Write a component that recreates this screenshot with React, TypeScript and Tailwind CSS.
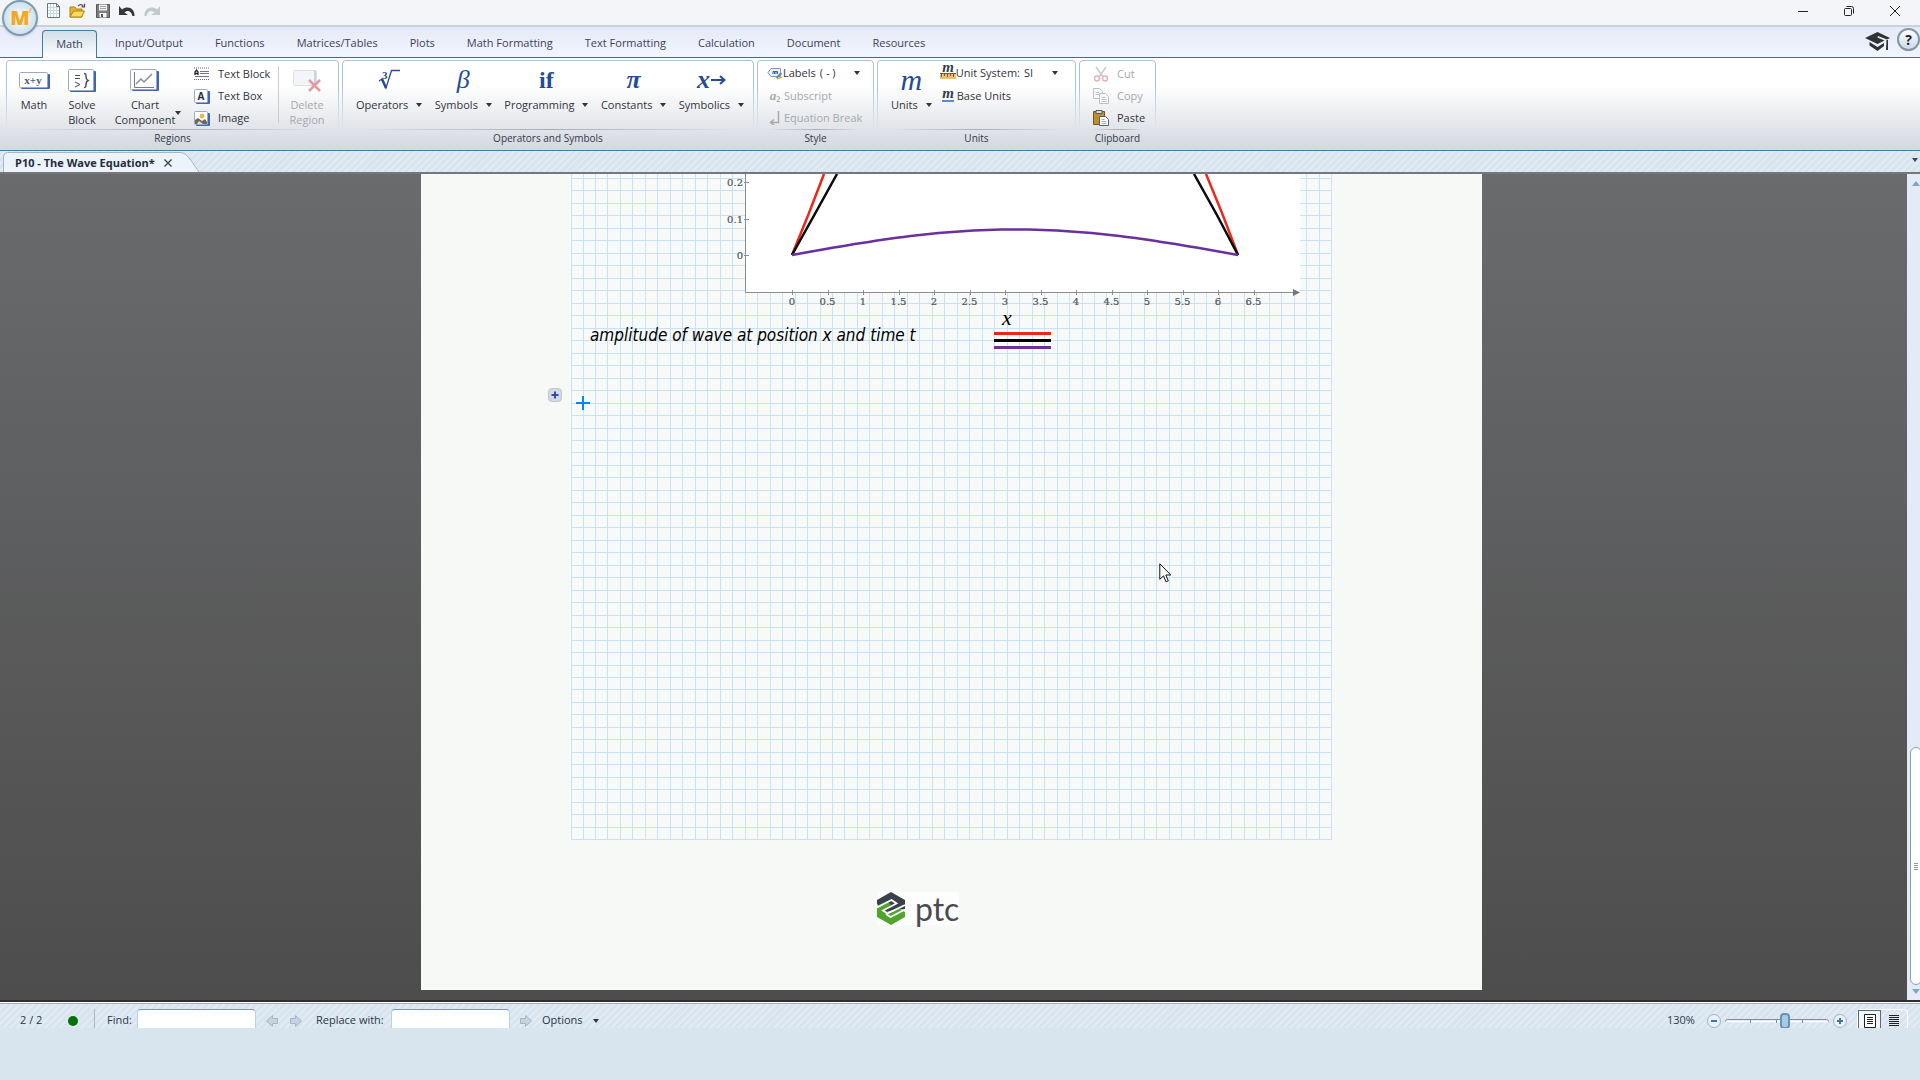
import * as React from "react";
import clsx from "clsx";

const tabs = [
  "Input/Output",
  "Functions",
  "Matrices/Tables",
  "Plots",
  "Math Formatting",
  "Text Formatting",
  "Calculation",
  "Document",
  "Resources",
];

const stripes =
  "bg-[#d8e4ee] bg-[repeating-linear-gradient(135deg,transparent_0px,transparent_3px,#e2ebf3_3px,#e2ebf3_5px)]";

function Caret({ className }: { className?: string }) {
  return (
    <svg viewBox="0 0 6 4" className={clsx("h-1 w-1.5 shrink-0", className)} fill="currentColor" aria-hidden="true">
      <path d="M0 0h6L3 4z" />
    </svg>
  );
}

/** Blue-edged tile shared by the region icons. */
function Tile({ w, h, children }: { w: number; h: number; children?: React.ReactNode }) {
  return (
    <svg width={w} height={h} viewBox={`0 0 ${w} ${h}`} aria-hidden="true">
      <rect x="2" y="2" width={w - 2} height={h - 2} rx="1" fill="#3f66b5" />
      <rect x="0.5" y="0.5" width={w - 3} height={h - 2} rx="1" fill="#fdfdfe" stroke="#9aa9c6" />
      {children}
    </svg>
  );
}

/* ---------- title bar ---------- */

function TitleBar() {
  return (
    <header className="flex h-[27px] items-start justify-between border-b-2 border-[#cbd0dc] bg-[#f3f5f8]">
      <div className="flex gap-[7px] pl-[45px] pt-[3px]">
        <button type="button" aria-label="New" className="h-4 w-4">
          <svg viewBox="0 0 16 16">
            <path d="M2.500.5h9l3 3v11h-12z" fill="#f8fbfb" stroke="#6c7478" />
            <path d="M11.500.5v3h3" fill="none" stroke="#6c7478" />
            <path d="M5.500 1v13M8.500 1v13M11.500 4v10M3 4.500h11M3 7.500h11M3 10.500h11" stroke="#c3dce2" />
          </svg>
        </button>
        <button type="button" aria-label="Open" className="h-4 w-[18px]">
          <svg viewBox="0 0 18 16">
            <path d="M2 14V4h5l1 2h6v8z" fill="#e9b52c" stroke="#a9801f" />
            <path d="M2 14l3.500-6h11l-3 6z" fill="#ffdc55" stroke="#a9801f" />
            <path d="M10 3c2-2 4-1.500 5 0M16.500.8v3h-3" fill="none" stroke="#4b5055" strokeWidth="1.300" />
          </svg>
        </button>
        <button type="button" aria-label="Save" className="ml-0.5 h-4 w-4">
          <svg viewBox="0 0 16 16">
            <path d="M1.500 1.500h13v13h-13z" fill="#7d7d7f" stroke="#58585b" />
            <path d="M4 1.500h8v6H4z" fill="#eef0f1" />
            <path d="M5 3.500h6M5 5.500h6" stroke="#a2a5a8" />
            <path d="M4.500 10h7v4.500h-7z" fill="#f4f5f6" />
            <path d="M6 11h2v3H6z" fill="#58585b" />
          </svg>
        </button>
        <button type="button" aria-label="Undo" className="h-4 w-[18px]">
          <svg viewBox="0 0 18 16">
            <path d="M1 3v9h9L6.500 9.500c3-2.500 6.500-2 8 3.500h2C17 6 10 2 4 6.500z" fill="#33373c" />
          </svg>
        </button>
        <button type="button" aria-label="Redo" disabled className="h-4 w-[18px]">
          <svg viewBox="0 0 18 16">
            <path d="M17 3v9H8l3.500-2.500c-3-2.500-6.500-2-8 3.500h-2C1 6 8 2 14 6.500z" fill="#c4c9cc" />
          </svg>
        </button>
      </div>
      <div className="flex gap-9 pr-5 pt-[5px] text-[#222]">
        <button type="button" aria-label="Minimize" className="h-3 w-2.5">
          <svg viewBox="0 0 10 12" fill="none" stroke="currentColor">
            <path d="M0 6.500h10" />
          </svg>
        </button>
        <button type="button" aria-label="Restore" className="h-3 w-2.5">
          <svg viewBox="0 0 10 12" fill="none" stroke="currentColor">
            <rect x="0.5" y="3.500" width="7" height="7" rx="1" />
            <path d="M2.500 1.500h5a2 2 0 0 1 2 2v5" />
          </svg>
        </button>
        <button type="button" aria-label="Close" className="h-3 w-2.5">
          <svg viewBox="0 0 10 12" fill="none" stroke="currentColor">
            <path d="M0 1l10 10M10 1L0 11" />
          </svg>
        </button>
      </div>
    </header>
  );
}

function AppButton() {
  return (
    <button
      type="button"
      aria-label="Application menu"
      className="absolute left-[2px] top-0 flex h-9 w-9 items-center justify-center rounded-full border-2 border-[#7d9bb4] bg-radial from-white to-[#bcd5e6] text-[20px] leading-none font-extrabold text-[#f5a623] shadow-sm"
    >
      M
      <svg className="absolute right-1 top-1.5 h-1.5 w-1" viewBox="0 0 4 6" fill="#f7c46a" aria-hidden="true">
        <path d="M2 0h2L2 5H0z" />
      </svg>
    </button>
  );
}

function TabStrip() {
  return (
    <nav className="flex h-[31px] items-end justify-between border-b border-[#2f7a80] bg-linear-to-b from-[#e6eaf6] to-[#f0f5ff]">
      <div className="flex items-end pl-[42px] text-[#3c4257]">
        <button
          type="button"
          className="-mb-px mr-0.5 h-[28px] w-[55px] rounded-t border border-b-0 border-[#3f7d99] bg-linear-to-b from-[#cfdfea] to-white"
        >
          Math
        </button>
        {tabs.map((t) => (
          <button key={t} type="button" className="h-[27px] px-4">
            {t}
          </button>
        ))}
      </div>
      <div className="flex items-center gap-[7px] self-start">
        <button type="button" aria-label="Learning" className="mt-1 h-[19px] w-[25px]">
          <svg viewBox="0 0 25 19" fill="#303236">
            <path d="M12.500 0L25 6l-3 1.500-9-3.500-.5 1.500 7 3-7 3.500L0 6z" />
            <path d="M4.500 10v3.500l8 5.500 6.500-5v-3l-6.500 4z" />
            <path d="M21.500 8h1.500v10h-2z" />
          </svg>
        </button>
        <button
          type="button"
          aria-label="Help"
          className="mt-px h-[23px] w-[23px] rounded-full border-2 border-[#8396a8] bg-linear-to-b from-white to-[#cddae6] text-[14px] leading-none font-bold text-[#1d2230]"
        >
          ?
        </button>
      </div>
    </nav>
  );
}

/* ---------- ribbon ---------- */

interface GroupProps {
  label: string;
  className?: string;
  children: React.ReactNode;
}

function Group({ label, className, children }: GroupProps) {
  return (
    <section aria-label={label} className={clsx("flex h-[86px] flex-col", className)}>
      <div className="relative flex flex-1 rounded-t">
        <div className="pointer-events-none absolute inset-0 rounded-t border border-b-0 border-[#a9c1da] mask-b-from-40%" />
        {children}
      </div>
      <div className="mx-3 h-px bg-linear-to-r from-transparent via-[#a9aeb6] to-transparent" />
      <div className="h-4 text-center text-[10px] leading-4 text-[#32384a]">{label}</div>
    </section>
  );
}

interface BigButtonProps {
  icon: React.ReactNode;
  label: React.ReactNode;
  disabled?: boolean;
  className?: string;
}

function BigButton({ icon, label, disabled, className }: BigButtonProps) {
  return (
    <button
      type="button"
      disabled={disabled}
      className={clsx("flex flex-col items-center pt-2", disabled && "text-[#a6a9ad]", className)}
    >
      <span className="flex h-6 items-center justify-center">{icon}</span>
      <span className="mt-[5px] leading-[15px]">{label}</span>
    </button>
  );
}

function OperatorButton({ glyph, label }: { glyph: React.ReactNode; label: string }) {
  return (
    <button type="button" className="flex flex-col items-center pt-1.5">
      <span className="flex h-7 items-center justify-center font-['Liberation_Serif',serif] text-[24px] leading-7 font-bold text-[#264a94]">
        {glyph}
      </span>
      <span className="mt-[3px] flex items-center gap-2 leading-[15px]">
        {label}
        <Caret />
      </span>
    </button>
  );
}

interface SmallButtonProps {
  icon: React.ReactNode;
  label: string;
  disabled?: boolean;
  gap?: string;
}

function SmallButton({ icon, label, disabled, gap = "gap-2" }: SmallButtonProps) {
  return (
    <button
      type="button"
      disabled={disabled}
      className={clsx("flex h-[22px] items-center whitespace-nowrap", gap, disabled && "text-[#a6a9ad]")}
    >
      <span className="flex w-4 shrink-0 justify-center">{icon}</span>
      {label}
    </button>
  );
}

function RegionsGroup() {
  return (
    <Group label="Regions" className="w-[333px]">
      <div className="flex flex-1 pl-1">
        <BigButton
          className="w-12"
          label="Math"
          icon={
            <Tile w={31} h={17}>
              <text x="14" y="12" textAnchor="middle" fontSize="11" fontWeight="bold" fontFamily="Liberation Serif, serif" fill="#505b70">
                x+y
              </text>
            </Tile>
          }
        />
        <BigButton
          className="w-12"
          label={<>Solve<br />Block</>}
          icon={
            <Tile w={28} h={23}>
              <path d="M7 6.500h5M7 9.500h5M7 13l5 2.500-5 2.500" fill="none" stroke="#4c4f55" />
              <path d="M16 4.500c2 0 2 1 2 3s0 3 2 4c-2 1-2 2-2 4s0 3-2 3" fill="none" stroke="#4c4f55" strokeWidth="1.500" />
            </Tile>
          }
        />
        <div className="flex w-[84px] items-end justify-center">
          <BigButton
            className="h-full"
            label={<>Chart<br />Component</>}
            icon={
              <Tile w={29} h={22}>
                <path d="M4.500 3v15.500H24" fill="none" stroke="#777b82" />
                <path d="M6 15l5-5 3 3 8-8" fill="none" stroke="#8a8e95" strokeWidth="1.500" />
              </Tile>
            }
          />
          <Caret className="mb-3.5" />
        </div>
        <div className="flex w-[88px] flex-col pl-1 pt-[3px]">
          <SmallButton
            label="Text Block"
            icon={
              <svg width="16" height="14" viewBox="0 0 16 14" aria-hidden="true">
                <path d="M0 1h16M0 12.500h16" stroke="#4d6cb3" strokeDasharray="1 1" />
                <path d="M6 4.500h9M6 6.500h9M1 9.500h14" stroke="#777" />
                <path d="M1 8V5l1.500-2L4 5v3M1 6.500h3" fill="none" stroke="#222" strokeWidth="1.300" />
              </svg>
            }
          />
          <SmallButton
            label="Text Box"
            icon={
              <Tile w={16} h={15}>
                <text x="7" y="11" textAnchor="middle" fontSize="10" fontWeight="bold" fill="#2c2f36">
                  A
                </text>
              </Tile>
            }
          />
          <SmallButton
            label="Image"
            icon={
              <Tile w={16} h={15}>
                <circle cx="8" cy="5" r="2" fill="#f3c233" stroke="#c28e12" strokeWidth="0.5" />
                <path d="M1 13V9l3-2 4 3 3-2 2 3v2z" fill="#6f6658" />
                <path d="M3 13l2-3 4 3z" fill="#e8e2d2" />
              </Tile>
            }
          />
        </div>
        <div className="my-1.5 w-px bg-[#c9ccd2]" />
        <BigButton
          className="w-14"
          disabled
          label={<>Delete<br />Region</>}
          icon={
            <svg width="29" height="24" viewBox="0 0 29 24" aria-hidden="true">
              <rect x="0.5" y="2.500" width="23" height="15" rx="1" fill="#f4f5f9" stroke="#dcdfe8" />
              <path d="M22 3v14" stroke="#c9d3ea" strokeWidth="2" />
              <path d="M16 12l11 11M27 12L16 23" stroke="#e79a9d" strokeWidth="2.500" />
            </svg>
          }
        />
      </div>
    </Group>
  );
}

function OperatorsGroup() {
  return (
    <Group label="Operators and Symbols" className="w-[412px]">
      <div className="flex flex-1 items-start justify-between pl-3.5 pr-2.5">
        <OperatorButton
          label="Operators"
          glyph={
            <svg width="24" height="24" viewBox="0 0 24 24" aria-hidden="true">
              <path d="M2 13l3-2 4 9L14.500 2.500H23" fill="none" stroke="#264a94" strokeWidth="1.300" />
              <path d="M5 11l4 9" stroke="#264a94" strokeWidth="2.500" />
              <text x="5" y="11" fontSize="11" fontFamily="Liberation Serif, serif" fill="#264a94">
                3
              </text>
            </svg>
          }
        />
        <OperatorButton label="Symbols" glyph={<i className="text-[26px] font-normal">β</i>} />
        <OperatorButton label="Programming" glyph="if" />
        <OperatorButton label="Constants" glyph={<i className="text-[26px]">π</i>} />
        <OperatorButton
          label="Symbolics"
          glyph={
            <>
              <i className="text-[26px]">x</i>
              <svg width="16" height="12" viewBox="0 0 16 12" fill="none" stroke="currentColor" strokeWidth="2" aria-hidden="true">
                <path d="M1 6h13M10 2l4.500 4-4.500 4" />
              </svg>
            </>
          }
        />
      </div>
    </Group>
  );
}

function StyleGroup() {
  return (
    <Group label="Style" className="w-[117px]">
      <div className="flex flex-1 flex-col pl-2.5 pr-1.5 pt-[3px]">
        <div className="flex h-5 items-center">
          <svg width="16" height="14" viewBox="0 0 16 14" className="shrink-0" aria-hidden="true">
            <path d="M1 6.500l3-4h9.500v8H4z" fill="#eaf1fb" stroke="#7b97c6" />
            <path d="M6 8V5.500h1.500V8M7.500 5.500H9V8M9 5.500h1.500V8" fill="none" stroke="#3a5fa8" />
            <path d="M14.500 7l-5 5" stroke="#5d86d0" strokeWidth="2" />
            <path d="M10 13l5-2" stroke="#e4b13c" strokeWidth="1.500" />
          </svg>
          <label htmlFor="labels">Labels</label>
          <select id="labels" className="ml-1 flex-1 appearance-none bg-transparent">
            <option>( - )</option>
          </select>
          <Caret className="mr-2" />
        </div>
        <div className="flex flex-col items-start pt-0.5">
          <SmallButton
            disabled
            gap="gap-px"
            label="Subscript"
            icon={
              <span className="font-['Liberation_Serif',serif] text-[13px] font-bold italic">
                a<sub className="text-[8px] not-italic">2</sub>
              </span>
            }
          />
          <SmallButton
            disabled
            gap="gap-px"
            label="Equation Break"
            icon={
              <svg width="12" height="14" viewBox="0 0 12 14" fill="none" stroke="currentColor" strokeWidth="1.500" aria-hidden="true">
                <path d="M9.500 0v11.500H2M5 8.500l-3.500 3 3.500 2.500" />
              </svg>
            }
          />
        </div>
      </div>
    </Group>
  );
}

function UnitsGroup() {
  return (
    <Group label="Units" className="w-[199px]">
      <div className="flex flex-1 items-start pl-3.5 pr-[18px]">
        <OperatorButton label="Units" glyph={<i className="text-[30px] font-normal">m</i>} />
        <div className="flex flex-1 flex-col pl-2 pt-[3px]">
          <div className="flex h-5 items-center">
            <svg width="16" height="16" viewBox="0 0 16 16" className="shrink-0 overflow-visible" aria-hidden="true">
              <text x="8" y="7" textAnchor="middle" fontSize="15" fontWeight="bold" fontStyle="italic" fontFamily="Liberation Serif, serif" fill="#333a48">
                m
              </text>
              <rect x="0" y="8" width="16" height="6" fill="#f0c070" />
              <path d="M0 8.500h16M1.500 8v4M4.500 8v3M7.500 8v4M10.500 8v3M13.500 8v4" stroke="#6d5a3a" />
            </svg>
            <label htmlFor="unit-system" className="whitespace-nowrap">Unit System:</label>
            <select id="unit-system" className="ml-1 w-6 flex-1 appearance-none bg-transparent">
              <option>SI</option>
            </select>
            <Caret />
          </div>
          <div className="flex flex-col items-start pt-0.5">
            <SmallButton
              gap="gap-px"
              label="Base Units"
              icon={
                <svg width="12" height="12" viewBox="0 0 12 12" className="overflow-visible" aria-hidden="true">
                  <text x="6" y="8" textAnchor="middle" fontSize="15" fontWeight="bold" fontStyle="italic" fontFamily="Liberation Serif, serif" fill="#333a48">
                    m
                  </text>
                  <path d="M0 11h12" stroke="#2f62c4" strokeWidth="1.500" />
                </svg>
              }
            />
          </div>
        </div>
      </div>
    </Group>
  );
}

function ClipboardGroup() {
  return (
    <Group label="Clipboard" className="w-[77px]">
      <div className="flex flex-1 flex-col pl-3.5 pt-[3px]">
        <SmallButton
          disabled
          label="Cut"
          icon={
            <svg width="16" height="16" viewBox="0 0 16 16" fill="none" aria-hidden="true">
              <path d="M3 1l7 10M13 1L6 11" stroke="#c7c9cd" strokeWidth="1.500" />
              <circle cx="4" cy="12.500" r="2.500" stroke="#e6b5b8" strokeWidth="1.500" />
              <circle cx="12" cy="12.500" r="2.500" stroke="#e6b5b8" strokeWidth="1.500" />
            </svg>
          }
        />
        <SmallButton
          disabled
          label="Copy"
          icon={
            <svg width="16" height="16" viewBox="0 0 16 16" fill="#f7f8f9" stroke="#bcbfc4" aria-hidden="true">
              <path d="M.5.5h6l3 3v7h-9z" />
              <path d="M2.500 4.500h4M2.500 6.500h4" />
              <path d="M6.500 5.500h6l3 3v7h-9z" />
              <path d="M8.500 9.500h4M8.500 11.500h5M8.500 13.500h5" />
            </svg>
          }
        />
        <SmallButton
          label="Paste"
          icon={
            <svg width="16" height="16" viewBox="0 0 16 16" aria-hidden="true">
              <path d="M.5 1.500h11v13H.5z" fill="#c18d2c" stroke="#73541c" />
              <path d="M3 .5h6v3H3z" fill="#d9dcdf" stroke="#55585c" />
              <path d="M6.500 6.500h6l3 3v6h-9z" fill="#fff" stroke="#55606e" />
              <path d="M8.500 9.500h3M8.500 11.500h5M8.500 13.500h5" stroke="#a3a9b2" />
            </svg>
          }
        />
      </div>
    </Group>
  );
}

function Ribbon() {
  return (
    <div className="flex h-[93px] items-start gap-[3px] border-b border-[#4480a8] bg-linear-to-b from-white from-30% to-[#d3d7df] pl-1.5 pt-0.5 text-[#32353b]">
      <RegionsGroup />
      <OperatorsGroup />
      <StyleGroup />
      <UnitsGroup />
      <ClipboardGroup />
    </div>
  );
}

function DocumentTabs() {
  return (
    <div className={clsx("flex h-[23px] items-end justify-between border-b-2 border-[#75777c]", stripes)}>
      <div className="relative flex h-5 items-center gap-2 pl-[15px] pt-0.5">
        <svg className="absolute bottom-0 left-0 h-5 w-[202px]" viewBox="0 0 202 20" aria-hidden="true">
          <path d="M3.500 20V4.500q0-4 4-4H180q6 0 11 8l8 11.500" fill="#edf3fa" stroke="#a7b4c4" />
        </svg>
        <span className="relative font-bold text-[#252c3b]">P10 - The Wave Equation*</span>
        <button type="button" aria-label="Close document" className="relative h-2.5 w-2.5 text-[#3c4250]">
          <svg viewBox="0 0 10 10" fill="none" stroke="currentColor" strokeWidth="1.300">
            <path d="M1.500 1.500l7 7M8.500 1.500l-7 7" />
          </svg>
        </button>
      </div>
      <button type="button" aria-label="Document list" className="mb-2.5 mr-0.5 text-[#34465c]">
        <Caret />
      </button>
    </div>
  );
}

/* ---------- worksheet ---------- */

const columns = Array.from({ length: 61 }, (_, i) => Math.floor(12 + i * 12.475));
const rows = Array.from({ length: 54 }, (_, i) => Math.round(4 + i * 12.475));

function GraphPaper() {
  return (
    <svg className="block" width="761" height="666" viewBox="0 0 761 666" shapeRendering="crispEdges" aria-hidden="true">
      <rect width="761" height="666" fill="#f8faf9" />
      {[0, ...columns].map((x) => (
        <path key={x} d={`M${x + 0.5} 0v666`} stroke="#cbe3f8" />
      ))}
      {rows.map((y) => (
        <path key={y} d={`M0 ${y + 0.5}h761`} stroke="#c6e2f8" />
      ))}
    </svg>
  );
}

const xTicks = Array.from({ length: 14 }, (_, i) => i / 2);
const yTicks = [0, 0.1, 0.2];

const toX = (v: number) => 67 + v * 71;
const toY = (v: number) => 81 - v * 365;

const wave = Array.from({ length: 65 }, (_, i) => {
  const v = (i / 64) * Math.PI * 2;
  return `${toX(v).toFixed(1)},${toY(0.07 * Math.sin(v / 2)).toFixed(1)}`;
}).join(" ");

function WavePlot() {
  return (
    <svg className="absolute left-[154px] top-0" width="575" height="136" viewBox="0 0 575 136" role="img" aria-label="Wave plot">
      <rect x="21" width="554" height="118" fill="#fff" />
      <g stroke="#8b8d90" fill="none">
        <path d="M20.500 0v118.500H568" />
        {xTicks.map((v) => (
          <path key={v} d={`M${Math.round(toX(v)) + 0.5} 116v5`} />
        ))}
        {yTicks.map((v) => (
          <path key={v} d={`M19 ${Math.round(toY(v)) + 0.5}h5`} />
        ))}
      </g>
      <path d="M568 115l7 3.500-7 3.500z" fill="#777" />
      <g fill="none" strokeWidth="2.500" strokeLinejoin="round">
        <path d="M67 81Q84 40 99 0M513 81Q498 40 481 0" stroke="#e8291c" />
        <path d="M67 81Q90 40 112 0M513 81Q492 40 469 0" stroke="#0a0a0a" />
        <polyline points={wave} stroke="#6b2f9e" />
      </g>
      <g fill="#505357" stroke="#505357" strokeWidth="0.200" fontSize="10" fontFamily="DejaVu Serif, serif">
        {xTicks.map((v) => (
          <text key={v} x={toX(v)} y="131" textAnchor="middle">
            {v}
          </text>
        ))}
        {yTicks.map((v) => (
          <text key={v} x="18" y={toY(v) + 4} textAnchor="end">
            {v}
          </text>
        ))}
      </g>
    </svg>
  );
}

function Worksheet() {
  return (
    <div className="relative ml-[150px] w-[761px]">
      <GraphPaper />
      <WavePlot />
      <p className="absolute left-[19px] top-[149px] whitespace-nowrap font-['DejaVu_Sans_Condensed','DejaVu_Sans',sans-serif] text-[17px] leading-6 text-black italic">
        amplitude of wave at position x and time t
      </p>
      <div className="absolute left-[423px] top-[134px] flex w-[57px] flex-col gap-1">
        <i className="h-5 pl-2 font-['Liberation_Serif',serif] text-[22px] leading-5 text-black">x</i>
        <span className="h-[3px] bg-[#f02516]" />
        <span className="h-[3px] bg-black" />
        <span className="h-[3px] bg-[#6b2f9e]" />
      </div>
      <button
        type="button"
        aria-label="Expand area"
        className="absolute -left-[23px] top-[214px] h-3.5 w-3.5 rounded-sm border border-[#c3c6cd] bg-[#d6d9e0]"
      >
        <svg viewBox="0 0 12 12" stroke="#2d4fae" strokeWidth="2">
          <path d="M2.500 6h7M6 2.500v7" />
        </svg>
      </button>
      <svg className="absolute left-[5px] top-[222px]" width="14" height="14" viewBox="0 0 14 14" stroke="#0a84f0" strokeWidth="2" aria-hidden="true">
        <path d="M7 0v14M0 7h14" />
      </svg>
      <svg className="absolute left-[588px] top-[389px]" width="13" height="20" viewBox="0 0 13 20" aria-hidden="true">
        <path d="M.8.8v15.500l3.700-3.500 2.500 6 2.300-1-2.500-5.800h5z" fill="#fff" stroke="#111" />
      </svg>
    </div>
  );
}

function PtcLogo() {
  return (
    <div className="flex pl-[456px] pt-[52px]">
      <div className="flex items-center gap-2.5 bg-white/70">
        <svg width="28" height="33" viewBox="0 0 28 33" aria-hidden="true">
          <path d="M0 12V8l14-8 14 8v10l-7-1.500L10 20l-5-3z" fill="#3b414b" />
          <path d="M28 20v5l-14 8-14-8V14l10-5 4 4-7 5 4 2.500 10-5z" fill="#51a52f" />
          <path d="M0 15.500L14.500 8l5 3.500L6 18.500l4.500 3L28 13" fill="none" stroke="#fff" strokeWidth="1.800" />
          <path d="M28 17.500L13.500 25 9 22" fill="none" stroke="#fff" strokeWidth="1.800" />
        </svg>
        <span className="font-[Lato,sans-serif] text-[32px] leading-8 text-[#4a4c50]">ptc</span>
      </div>
    </div>
  );
}

function ScrollBar() {
  return (
    <div className="flex w-[13px] shrink-0 flex-col items-start overflow-hidden bg-[#e4ebf7] pl-[3px] text-[#7fa6c4]">
      <svg className="mt-[7px] ml-0.5 shrink-0" width="8" height="5" viewBox="0 0 8 5" fill="currentColor" aria-hidden="true">
        <path d="M0 5h8L4 0z" />
      </svg>
      <div className="flex-1" />
      <div className="flex h-[238px] w-3 shrink-0 flex-col items-center justify-center gap-px rounded-md border border-[#7ea3c0] bg-white">
        <span className="h-px w-1 bg-[#8a97a8]" />
        <span className="h-px w-1 bg-[#8a97a8]" />
        <span className="h-px w-1 bg-[#8a97a8]" />
        <span className="h-px w-1 bg-[#8a97a8]" />
      </div>
      <svg className="mt-1 mb-1.5 ml-0.5 shrink-0" width="8" height="5" viewBox="0 0 8 5" fill="currentColor" aria-hidden="true">
        <path d="M0 0h8L4 5z" />
      </svg>
    </div>
  );
}

/* ---------- status bar ---------- */

function ArrowIcon({ flip }: { flip?: boolean }) {
  return (
    <svg width="12" height="12" viewBox="0 0 12 12" className={flip ? "rotate-180" : undefined} aria-hidden="true">
      <path d="M.5 3.500h5v-3l6 5.500-6 5.500v-3h-5z" fill="#c6d3de" stroke="#a5b5c3" />
    </svg>
  );
}

function ZoomButton({ label, children }: { label: string; children: React.ReactNode }) {
  return (
    <button type="button" aria-label={label} className="h-3.5 w-3.5 rounded-full border border-[#9db6ca] bg-[#e9f1f8]">
      <svg viewBox="0 0 12 12" stroke="#3f78a4" strokeWidth="2">
        {children}
      </svg>
    </button>
  );
}

const inputClass = "h-[23px] w-[119px] rounded border border-[#b3d2ec] border-t-[#6d9dc0] bg-white px-1 outline-none";

function StatusBar() {
  return (
    <footer className="border-t border-white bg-[#d8e4ee] pb-[52px] text-[#2b3847]">
      <div className={clsx("flex h-[25px] items-start justify-between overflow-hidden border-t border-[#aab0b8] pt-[5px]", stripes)}>
        <div className="flex h-[23px] items-center pl-5">
          <span className="w-[48px]">2 / 2</span>
          <span className="h-2.5 w-2.5 rounded-full bg-[#067006]" />
          <span className="ml-4 h-full w-px bg-[#a9b6c4]" />
          <label htmlFor="find" className="ml-3 w-[30px] whitespace-nowrap">Find:</label>
          <input id="find" className={inputClass} />
          <button type="button" aria-label="Find previous" className="ml-2.5">
            <ArrowIcon flip />
          </button>
          <button type="button" aria-label="Find next" className="ml-3">
            <ArrowIcon />
          </button>
          <label htmlFor="replace" className="ml-3.5 w-[75px] whitespace-nowrap">Replace with:</label>
          <input id="replace" className={inputClass} />
          <button type="button" aria-label="Replace" className="ml-2.5">
            <ArrowIcon />
          </button>
          <button type="button" className="ml-2.5 flex items-center gap-2.5">
            Options
            <Caret />
          </button>
        </div>
        <div className="flex h-[23px] items-center pr-3">
          <label htmlFor="zoom" className="w-10 whitespace-nowrap">130%</label>
          <ZoomButton label="Zoom out">
            <path d="M3 6h6" />
          </ZoomButton>
          <div className="relative ml-1 h-4 w-[104px]">
            <svg className="absolute inset-0" width="104" height="16" viewBox="0 0 104 16" fill="none" aria-hidden="true">
              <path d="M.5 8.500q0-2 2-2h99q2 0 2 2" stroke="#7b8d9d" />
              <path d="M1 8.500h102" stroke="#fff" strokeWidth="1.500" />
              <path d="M25.500 6v4M51.500 6v4M77.500 6v4" stroke="#7b8d9d" />
            </svg>
            <input
              id="zoom"
              type="range"
              min="0"
              max="100"
              defaultValue="59"
              className="absolute inset-0 h-4 w-full appearance-none bg-transparent [&::-webkit-slider-thumb]:h-4 [&::-webkit-slider-thumb]:w-2.5 [&::-webkit-slider-thumb]:appearance-none [&::-webkit-slider-thumb]:rounded-sm [&::-webkit-slider-thumb]:border-2 [&::-webkit-slider-thumb]:border-[#6a93b3] [&::-webkit-slider-thumb]:bg-[#a5cbe8]"
            />
          </div>
          <span className="ml-1 flex">
            <ZoomButton label="Zoom in">
              <path d="M3 6h6M6 3v6" />
            </ZoomButton>
          </span>
          <div className="ml-2.5 flex h-6 rounded border border-white">
            <button type="button" aria-label="Page view" className="flex w-[23px] items-center justify-center border border-[#5f6b7a] bg-[#f2f5f9]">
              <svg width="12" height="14" viewBox="0 0 12 14" fill="#fff" stroke="#222" aria-hidden="true">
                <path d="M.5.5h11v13H.5zM3 3.500h6M3 5.500h6M3 7.500h6M3 9.500h6" />
              </svg>
            </button>
            <button type="button" aria-label="Draft view" className="flex w-[26px] items-center justify-center">
              <svg width="10" height="12" viewBox="0 0 10 12" stroke="#222" aria-hidden="true">
                <path d="M0 .5h10M0 2.500h10M0 4.500h10M0 6.500h10M0 8.500h10M0 10.500h10" />
              </svg>
            </button>
          </div>
        </div>
      </div>
    </footer>
  );
}

export default function App() {
  return (
    <div className="relative flex min-h-screen flex-col overflow-hidden font-['Open_Sans','Noto_Sans',sans-serif] text-[11px]">
      <TitleBar />
      <TabStrip />
      <Ribbon />
      <DocumentTabs />
      <main className="flex flex-1 border-b-2 border-[#2f2f2f] bg-linear-to-b from-[#6a6b6d] to-[#4d4d4d]">
        <div className="flex flex-1 justify-center pr-1 pb-2.5">
          <div className="w-[1061px] bg-[#f7f9f7]">
            <Worksheet />
            <PtcLogo />
          </div>
        </div>
        <ScrollBar />
      </main>
      <StatusBar />
      <AppButton />
    </div>
  );
}
